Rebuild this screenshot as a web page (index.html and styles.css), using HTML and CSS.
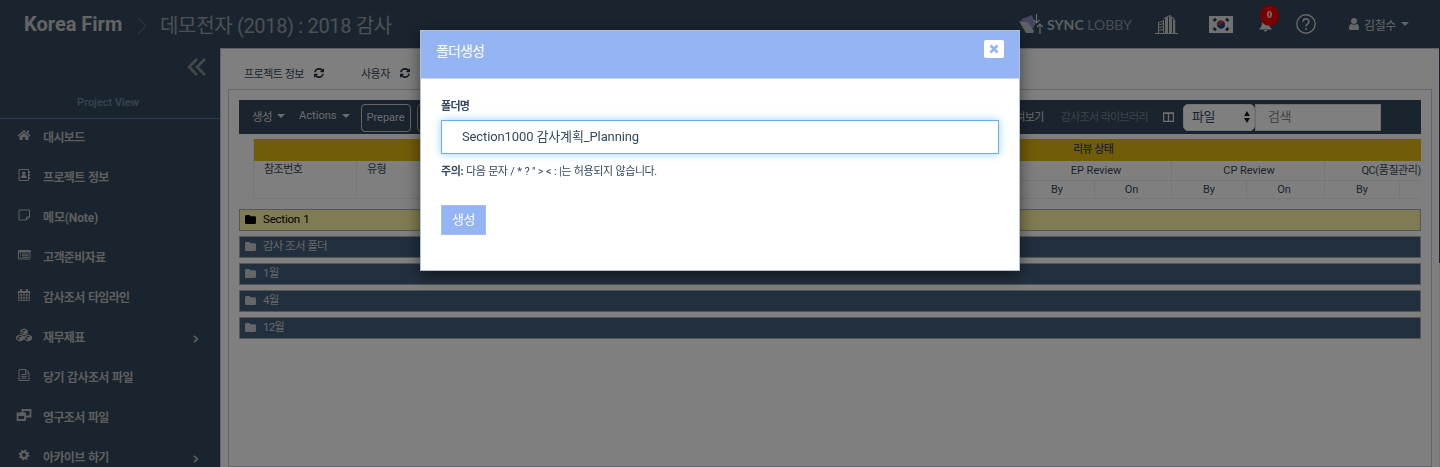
FILE: index.html
```html
<!DOCTYPE html>
<html lang="ko">
<head>
<meta charset="utf-8">
<title>Korea Firm</title>
<link rel="stylesheet" href="styles.css">
</head>
<body>
<svg class="defs" width="0" height="0">
  <symbol id="refresh" viewBox="0 0 1536 1536"><path d="M1511 928q0 5-1 7-64 268-268 434.500T764 1536q-146 0-282.500-55T238 1324l-129 129q-19 19-45 19t-45-19-19-45V960q0-26 19-45t45-19h448q26 0 45 19t19 45-19 45l-137 137q71 66 161 102t187 36q134 0 250-65t186-179q11-17 53-117 8-23 30-23h192q13 0 22.500 9.500t9.500 22.500zm25-800v448q0 26-19 45t-45 19h-448q-26 0-45-19t-19-45 19-45l138-138Q969 256 768 256q-134 0-250 65T332 500q-11 17-53 117-8 23-30 23H50q-13 0-22.500-9.500T18 608v-7q65-268 270-434.500T768 0q146 0 284 55.500T1297 212l130-129q19-19 45-19t45 19 19 45z"/></symbol>
  <symbol id="folder" viewBox="0 0 11 9"><path d="M1.300 0h2.600q1.200 0 1.300 1.200h4.300Q11 1.200 11 2.600v4.900Q11 9 9.500 9h-8Q0 9 0 7.500v-6Q0 0 1.300 0z"/></symbol>
  <symbol id="chev" viewBox="0 0 6 8"><path d="M1 .8 4.400 4 1 7.200" fill="none" stroke="currentColor" stroke-width="1.700"/></symbol>
</svg>

<header class="topbar">
  <span class="firm">Korea Firm</span>
  <svg class="crumb" viewBox="0 0 10 18"><path d="M1 1l8 8-8 8" fill="none" stroke="currentColor"/></svg>
  <span class="project">데모전자 (2018) : 2018 감사</span>
  <div class="tools">
    <div class="sync">
      <svg width="24" height="21" viewBox="0 0 24 21"><path fill="#8e8bc6" d="M2 5.500L13 1l3.500 9-4 7z"/><path fill="#c4c4c4" d="M0 7l9 1.500L15 17l-1 2H7z"/><path d="M17.500 0v9m-3-3 3 3 3-3M21 20V10m-3 3 3-3 3 3" fill="none" stroke="#d0d0d0" stroke-width="1.200"/></svg>
      <span class="sync-name"><b>SYNC</b> LOBBY</span>
    </div>
    <svg class="building" width="23" height="19" viewBox="0 0 23 19"><path d="M0 18.500h23" stroke="#ccc"/><path fill="#ccc" d="M10 3l3-1.500V18h-3zM14 1l3 1.500V18h-3zM18 4l2.200 1.500V18H18z"/><path d="M3 8l5-2M3 10.500l5-2M3 13l5-1.500M3 15.500l5-1M3.500 7.500V18M8.500 5v13M9 3.500L15 .5l5 4" stroke="#ccc" fill="none"/></svg>
    <svg class="flag" width="24" height="17" viewBox="0 0 24 17"><path fill="#fff" d="M0 0h24v17H0z"/><g transform="rotate(25 12 8.500)"><path fill="#cd2e3a" d="M8 8.500a4 4 0 0 1 8 0z"/><path fill="#0047a0" d="M8 8.500a4 4 0 0 0 8 0z"/><circle cx="10" cy="8.500" r="2" fill="#cd2e3a"/><circle cx="14" cy="8.500" r="2" fill="#0047a0"/></g><path d="M4.500 5L7 2.700M17 2.700L19.500 5M4.500 12L7 14.300M17 14.300l2.500-2.300" stroke="#333" stroke-width="2.600"/></svg>
    <div class="bell">
      <svg width="13" height="13" viewBox="0 0 13 13"><path fill="#ddd" d="M6.500 0C3 .5 3 3 2.800 6 2.500 8 1 9 0 10.500h13C12 9 10.500 8 10.200 6 10 3 10 .5 6.500 0zM5 11h3a1.500 1.500 0 0 1-3 0z"/></svg>
      <span class="badge">0</span>
    </div>
    <svg class="help" width="20" height="20" viewBox="0 0 20 20"><circle cx="10" cy="10" r="9.200" fill="none" stroke="#ccc" stroke-width="1.400"/><path d="M7 7.800C7 3.800 13 4 13 7.500c0 2.300-3 2.300-3 5" fill="none" stroke="#ccc" stroke-width="1.600"/><circle cx="10" cy="15" r="1.100" fill="#ccc"/></svg>
    <div class="user">
      <svg width="10" height="12" viewBox="0 0 10 12"><circle cx="5" cy="3" r="3" fill="#ccc"/><path fill="#ccc" d="M0 10.500Q0 6 2.500 6q2.500 1.500 5 0Q10 6 10 10.500q0 1.500-1.500 1.500h-7Q0 12 0 10.500z"/></svg>
      <span>김철수</span><i class="caret"></i>
    </div>
  </div>
</header>

<div class="shell">
  <aside class="sidebar">
    <div class="collapse"><svg width="19" height="18" viewBox="0 0 19 18"><path d="M10 1L2 9l8 8M18 1l-8 8 8 8" fill="none" stroke="currentColor" stroke-width="2.600"/></svg></div>
    <div class="view">Project View</div>
    <nav>
      <a><svg viewBox="0 0 14 14"><path d="M7 2l6.500 5.500-.8.900L7 3.700 1.300 8.400l-.8-.9zM10 2.500h2v3l-2-1.700zM2.500 8.300L7 4.600l4.500 3.700V12H8.200V9H5.800v3H2.500z"/></svg><span>대시보드</span></a>
      <a><svg viewBox="0 0 14 14"><path d="M2 1.500h9.500v11H2zM12.500 3v2M12.500 6v2M12.500 9v2" fill="none" stroke="currentColor"/><circle cx="6.800" cy="5.300" r="1.700"/><path d="M3.800 10q0-3 3-3t3 3z"/></svg><span>프로젝트 정보</span></a>
      <a><svg viewBox="0 0 14 14"><path d="M2 2h10.500v7l-3 3H2zM9.500 12V9h3" fill="none" stroke="currentColor"/></svg><span class="mixed">메모(Note)</span></a>
      <a><svg viewBox="0 0 14 14"><path d="M1.500 2.500h11.500v8.500H1.500zM3 6h1M5 6h6.500M3 7.700h1M5 7.700h6.500M3 9.400h1M5 9.400h6.500" fill="none" stroke="currentColor"/><path d="M1 2h12.500v2.500H1z"/></svg><span>고객준비자료</span></a>
      <a><svg viewBox="0 0 14 14"><path d="M1.500 3.500h11v9h-11zM1.500 7h11M1.500 10h11M4.200 5v8M7 5v8M9.800 5v8" fill="none" stroke="currentColor" stroke-width=".8"/><path d="M1 3h12v2H1zM3 1h2v3H3zM9 1h2v3H9z"/></svg><span>감사조서 타임라인</span></a>
      <a><svg class="wide" viewBox="0 0 16 14"><path d="M8 1l3 1.300v3L8 6.700 5 5.300v-3zM4 7l3.300 1.400v3L4 13 .7 11.400v-3zM12 7l3.300 1.400v3L12 13l-3.300-1.600v-3zM5 2.500L8 4l3-1.500M8 4v2.500M.7 8.500L4 10l3.300-1.500M4 10v3M8.700 8.500L12 10l3.300-1.500M12 10v3" fill="none" stroke="currentColor" stroke-width="1.100"/><path d="M8 4l3-1.500v3L8 6.700zM4 10l3.300-1.500v3L4 13zM12 10l3.300-1.500v3L12 13z"/></svg><span>재무제표</span><svg class="more"><use href="#chev"/></svg></a>
      <a><svg viewBox="0 0 14 14"><path d="M2 1.500h6.500l3.500 3v8H2zM8.500 1.500v3.500H12M4.200 6.500h5.500M4.200 8.400h5.500M4.200 10.300h5.500" fill="none" stroke="currentColor"/></svg><span>당기 감사조서 파일</span></a>
      <a><svg class="wide" viewBox="0 0 16 14"><path d="M6.500 2h8v6.500h-8z" fill="none" stroke="currentColor" stroke-width="1.800"/><path d="M1.500 5.500H9V12H1.500z" fill="#34495e" stroke="currentColor" stroke-width="1.800"/><path d="M1 5h8.500v3H1z"/></svg><span>영구조서 파일</span></a>
      <a><svg viewBox="0 0 14 14"><circle cx="7" cy="7" r="3.100" fill="none" stroke="currentColor" stroke-width="2.300"/><circle cx="7" cy="7" r="4.700" fill="none" stroke="currentColor" stroke-width="1.500" stroke-dasharray="1.900 1.790"/></svg><span>아카이브 하기</span><svg class="more"><use href="#chev"/></svg></a>
    </nav>
  </aside>

  <main class="content">
    <div class="tabs">
      <span>프로젝트 정보</span><svg><use href="#refresh"/></svg>
      <span class="tab-user">사용자</span><svg><use href="#refresh"/></svg>
    </div>
    <section class="panel">
      <div class="toolbar">
        <span class="drop">생성<i class="caret"></i></span>
        <span class="drop actions">Actions<i class="caret"></i></span>
        <span class="outline">Prepare</span><span class="outline">Review</span>
        <div class="toolbar-right">
          <span class="expand">펼쳐보기</span><span class="library">감사조서 라이브러리</span>
          <svg width="11" height="10" viewBox="0 0 11 10"><path d="M.6 1h9.800v8.400H.6zM5.500 1v8.400M.6 1.400h9.800" fill="none" stroke="#ddd" stroke-width="1.300"/></svg>
          <div class="search"><div class="select">파일<svg width="6" height="12" viewBox="0 0 6 12"><path d="M0 5l3-5 3 5zM0 7h6l-3 5z"/></svg></div><div class="query">검색</div></div>
        </div>
      </div>
      <div class="grid">
        <div class="g-left"><div class="gold"></div><div class="cols"><span>참조번호</span><span>유형</span></div></div>
        <div class="g-right"><div class="gold">리뷰 상태</div>
          <div class="reviews"><span>EP Review</span><span>CP Review</span><span class="qc">QC(품질관리)</span></div>
          <div class="signs"><span>By</span><span>On</span><span>By</span><span>On</span><span>By</span><span></span></div>
        </div>
      </div>
      <div class="rows">
        <div class="row selected"><svg><use href="#folder"/></svg>Section 1</div>
        <div class="row"><svg><use href="#folder"/></svg>감사 조서 폴더</div>
        <div class="row"><svg><use href="#folder"/></svg>1월</div>
        <div class="row"><svg><use href="#folder"/></svg>4월</div>
        <div class="row"><svg><use href="#folder"/></svg>12월</div>
      </div>
    </section>
  </main>
  <div class="scroll"></div>
</div>

<div class="backdrop">
  <div class="modal">
    <div class="modal-head"><span>폴더생성</span><button class="close"><svg width="10" height="10" viewBox="0 0 10 10"><path d="M1.500 1.500l7 7M8.500 1.500l-7 7" stroke="currentColor" stroke-width="2.500"/></svg></button></div>
    <div class="modal-body">
      <label>폴더명</label>
      <div class="field">Section1000 감사계획_Planning</div>
      <p class="note"><b>주의:</b> 다음 문자 / * ? " &gt; &lt; : |는 허용되지 않습니다.</p>
      <button class="create">생성</button>
    </div>
  </div>
</div>
</body>
</html>
```
FILE: styles.css
```css
* { box-sizing: border-box; }
body { margin: 0; height: 467px; overflow: hidden; background: #34495e; color: #34495e; font: 12px Roboto, "Noto Sans CJK KR", sans-serif; display: flex; flex-direction: column; }
svg { flex: none; fill: currentColor; }
.defs { position: absolute; }
span, label, p { white-space: nowrap; }
.caret { border: 4px solid transparent; border-top: 4.500px solid currentColor; border-bottom: 0; display: inline-block; }

.topbar { height: 48px; flex: none; display: flex; align-items: center; padding: 0 31px 0 24px; color: #c8c8c8; }
.firm { font-size: 20px; font-weight: 700; width: 113px; }
.crumb { width: 10px; height: 18px; color: #667788; margin-top: 4px; }
.project { font-size: 20px; color: #99a0a6; margin-left: 13px; letter-spacing: -.33px; }
.tools { margin-left: auto; display: flex; align-items: center; }
.sync { display: flex; align-items: center; gap: 4px; width: 136px; color: #b8bcc0; }
.sync-name { font: 14px Lato, sans-serif; color: #929ba4; }
.sync-name b { color: #b8bcc0; }
.flag { margin-left: 31px; opacity: .85; }
.bell { position: relative; width: 13px; height: 13px; margin: 2px 0 0 26px; }
.bell svg { display: block; }
.badge { position: absolute; left: 1px; top: -14px; width: 19px; height: 21px; border-radius: 50%; background: #f00000; color: #eee; font: bold 11px/19px "Liberation Serif", serif; text-align: center; }
.help { margin-left: 24px; }
.user { display: flex; align-items: center; margin-left: 33px; }
.user span { margin: 0 5px; letter-spacing: -.4px; }

.shell { flex: 1; min-height: 0; display: flex; }
.sidebar { width: 220px; flex: none; color: #bdbdbd; }
.collapse { height: 42px; padding: 10px 14px 0 0; text-align: right; color: #8a9299; }
.view { height: 29px; padding-top: 6px; border-bottom: 1px solid #54749b; text-align: center; font-size: 11px; color: #6f8aa8; padding-right: 4px; font-weight: 500; }
nav a { height: 40px; display: flex; align-items: center; padding: 0 21px 2px 17px; font-weight: 700; line-height: 18px; letter-spacing: -.65px; word-spacing: 1px; }
nav .mixed { letter-spacing: -.15px; }
nav svg { width: 14px; height: 14px; margin: -7px 12px 0 0; }
nav .wide { width: 16px; margin-left: -1px; margin-right: 11px; }
nav .more { width: 6px; height: 8px; margin: 1px 0 0 auto; }

.content { flex: 1; min-width: 0; background: #fff; border: 1px solid #c3c3d2; border-width: 1px 0 0 1px; display: flex; flex-direction: column; padding: 0 7px 0 7px; }
.tabs { height: 40px; flex: none; display: flex; align-items: center; padding: 7px 0 0 16px; font-size: 11px; letter-spacing: -.5px; }
.tabs svg { width: 10px; height: 10px; margin-left: 10px; color: #223040; }
.tab-user { margin-left: 37px; }
.panel { flex: 1; border: 1px solid #c8c8d4; padding: 10px 10px 0 10px; overflow: hidden; }
.toolbar { height: 34px; background: #34495e; color: #d8d8d8; display: flex; align-items: center; padding: 0 40px 0 13px; }
.drop { display: flex; align-items: center; gap: 5px; margin-right: 14px; margin-top: -3px; font-size: 11.500px; letter-spacing: -.6px; }
.actions { margin-right: 11px; letter-spacing: .05px; font-size: 11px; }
.outline { width: 50px; height: 28px; border: 1px solid #ccc; border-radius: 4px; margin-right: 6px; margin-top: 1px; font-size: 11px; line-height: 26px; text-align: center; }
.toolbar-right { margin-left: auto; display: flex; align-items: center; font-size: 11px; gap: 16px; }
.expand, .library { letter-spacing: -.65px; margin-top: -3px; }
.expand { margin-right: 1px; }
.library { color: #7b8793; margin-right: -1px; }
.search { display: flex; margin-left: -7px; font-size: 13px; color: #34495e; }
.select { width: 72px; height: 27px; border: 1px solid #e3e8ee; border-radius: 5px; background: #fff; display: flex; align-items: center; justify-content: space-between; padding: 0 4px 3px 8px; letter-spacing: -.5px; }
.select svg { color: #18212c; margin-top: 3px; }
.query { width: 126px; height: 27px; background: #fff; border: 1px solid #ddd; color: #888; padding: 1px 12px; line-height: 21px; letter-spacing: -.5px; }

.grid { display: flex; margin: 5px 0 0 14px; height: 60px; overflow: hidden; font-size: 11px; border-left: 1px solid #eee; border-bottom: 1px solid #eee; }
.g-left { width: 514px; flex: none; }
.gold { height: 22px; background: #e3b910; line-height: 22px; padding-left: 305px; letter-spacing: -.6px; font-weight: 500; }
.g-left .cols { display: flex; height: 38px; letter-spacing: -.5px; }
.cols span { width: 103px; border-right: 1px solid #eee; padding: 0 10px; line-height: 18px; }
.cols span + span { border: 0; }
.g-right { flex: 1; }
.reviews { display: grid; grid-template-columns: 404px 153px 1fr; height: 20px; text-align: center; line-height: 19px; border-bottom: 1px solid #eee; }
.reviews span { border-right: 1px solid #eee; }
.reviews span:first-child { padding-left: 253px; }
.reviews span:nth-child(2) { padding-left: 2px; }
.reviews .qc { border: 0; text-align: right; letter-spacing: -.4px; }
.signs { display: grid; grid-template-columns: 75px 77px 75px 78px 75px 1fr; padding-left: 252px; text-align: center; height: 18px; line-height: 17px; }
.signs span { border-right: 1px solid #eee; }
.signs span:nth-child(2n) { padding-right: 3px; }
.signs span:last-child { border: 0; }
.rows { display: grid; gap: 5px; margin-top: 10px; }
.row { height: 22px; border: 1px solid #a8adb2; background: #445f7d; color: #ccc; padding: 0 0 2px 5px; display: flex; align-items: center; font-size: 11.500px; line-height: 18px; letter-spacing: -.8px; word-spacing: .5px; }
.row:not(.selected) { box-shadow: inset 0 0 0 1px #465e76; }
.row svg { width: 11px; height: 9px; margin-right: 7px; }
.rows .selected { background: #fff7a5; color: #000; letter-spacing: -.2px; }
.scroll { width: 1px; flex: none; background: linear-gradient(#34495e 215px, #eee 215px); }

.backdrop { position: fixed; inset: 0; background: rgba(0,0,0,.5); padding-top: 30px; }
.modal { width: 600px; height: 241px; margin: 0 auto; background: #fff; border: 1px solid #b3c1d3; box-shadow: 0 5px 15px rgba(0,0,0,.5); }
.modal-head { height: 48px; background: #94b4f4; border-bottom: 1px solid #c9d3e4; color: #fff; font-size: 14px; display: flex; justify-content: space-between; padding: 9px 15px; }
.modal-head span { line-height: 22px; letter-spacing: -.9px; }
.close { width: 20px; height: 18px; border: 0; border-radius: 2px; background: #fff; color: #94b4f4; padding: 0; display: flex; align-items: center; justify-content: center; }
.modal-body { padding: 18px 20px; }
.modal-body label { display: block; font-weight: 700; font-size: 11px; line-height: 20px; letter-spacing: -.7px; }
.field { height: 34px; margin-top: 3px; border: 1px solid #66afe9; box-shadow: 0 0 8px rgba(102,175,233,.6); padding: 0 20px; font-size: 13px; line-height: 32px; letter-spacing: -.12px; }
.note { margin: 9px 0 0; font-size: 11px; line-height: 18px; letter-spacing: -.4px; word-spacing: .45px; }
.create { display: block; width: 45px; height: 30px; margin-top: 24px; border: 1px solid #a4bef3; background: #94b4f4; color: #fff; font: 13px/24px Roboto, "Noto Sans CJK KR", sans-serif; letter-spacing: -.5px; padding: 0; }
```
